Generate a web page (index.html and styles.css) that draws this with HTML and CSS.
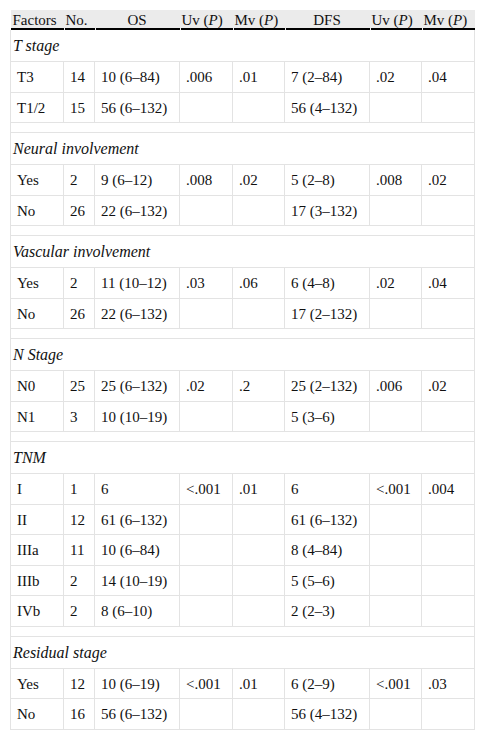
FILE: index.html
```html
<!DOCTYPE html>
<html>
<head>
<meta charset="utf-8">
<link rel="stylesheet" href="styles.css">
</head>
<body>
<table class="tbl">
  <colgroup>
    <col class="c53"><col class="c31"><col class="c85"><col class="c53"><col class="c52"><col class="c85"><col class="c52"><col class="c53">
  </colgroup>
  <thead>
    <tr>
      <th class="first">Factors</th>
      <th>No.</th>
      <th class="ctr">OS</th>
      <th>Uv (<i>P</i>)</th>
      <th>Mv (<i>P</i>)</th>
      <th class="ctr">DFS</th>
      <th>Uv (<i>P</i>)</th>
      <th>Mv (<i>P</i>)</th>
    </tr>
  </thead>
  <tbody>
    <tr class="grp top"><td colspan="8"><i>T stage</i></td></tr>
    <tr><td>T3</td><td>14</td><td>10 (6–84)</td><td>.006</td><td>.01</td><td>7 (2–84)</td><td>.02</td><td>.04</td></tr>
    <tr><td>T1/2</td><td>15</td><td>56 (6–132)</td><td></td><td></td><td>56 (4–132)</td><td></td><td></td></tr>
    <tr class="sp"><td colspan="8"></td></tr>

    <tr class="grp"><td colspan="8"><i>Neural involvement</i></td></tr>
    <tr><td>Yes</td><td>2</td><td>9 (6–12)</td><td>.008</td><td>.02</td><td>5 (2–8)</td><td>.008</td><td>.02</td></tr>
    <tr><td>No</td><td>26</td><td>22 (6–132)</td><td></td><td></td><td>17 (3–132)</td><td></td><td></td></tr>
    <tr class="sp"><td colspan="8"></td></tr>

    <tr class="grp"><td colspan="8"><i>Vascular involvement</i></td></tr>
    <tr><td>Yes</td><td>2</td><td>11 (10–12)</td><td>.03</td><td>.06</td><td>6 (4–8)</td><td>.02</td><td>.04</td></tr>
    <tr><td>No</td><td>26</td><td>22 (6–132)</td><td></td><td></td><td>17 (2–132)</td><td></td><td></td></tr>
    <tr class="sp"><td colspan="8"></td></tr>

    <tr class="grp"><td colspan="8"><i>N Stage</i></td></tr>
    <tr><td>N0</td><td>25</td><td>25 (6–132)</td><td>.02</td><td>.2</td><td>25 (2–132)</td><td>.006</td><td>.02</td></tr>
    <tr><td>N1</td><td>3</td><td>10 (10–19)</td><td></td><td></td><td>5 (3–6)</td><td></td><td></td></tr>
    <tr class="sp"><td colspan="8"></td></tr>

    <tr class="grp"><td colspan="8"><i>TNM</i></td></tr>
    <tr><td>I</td><td>1</td><td>6</td><td>&lt;.001</td><td>.01</td><td>6</td><td>&lt;.001</td><td>.004</td></tr>
    <tr><td>II</td><td>12</td><td>61 (6–132)</td><td></td><td></td><td>61 (6–132)</td><td></td><td></td></tr>
    <tr><td>IIIa</td><td>11</td><td>10 (6–84)</td><td></td><td></td><td>8 (4–84)</td><td></td><td></td></tr>
    <tr><td>IIIb</td><td>2</td><td>14 (10–19)</td><td></td><td></td><td>5 (5–6)</td><td></td><td></td></tr>
    <tr><td>IVb</td><td>2</td><td>8 (6–10)</td><td></td><td></td><td>2 (2–3)</td><td></td><td></td></tr>
    <tr class="sp"><td colspan="8"></td></tr>

    <tr class="grp"><td colspan="8"><i>Residual stage</i></td></tr>
    <tr><td>Yes</td><td>12</td><td>10 (6–19)</td><td>&lt;.001</td><td>.01</td><td>6 (2–9)</td><td>&lt;.001</td><td>.03</td></tr>
    <tr><td>No</td><td>16</td><td>56 (6–132)</td><td></td><td></td><td>56 (4–132)</td><td></td><td></td></tr>
  </tbody>
</table>
</body>
</html>
```

FILE: styles.css
```css
html, body {
  margin: 0;
  padding: 0;
  background: #fff;
}
body {
  padding: 10px 0 0 10px;
  font-family: "Liberation Serif", "Times New Roman", serif;
  font-size: 15px;
  color: #111;
}
.tbl {
  border-collapse: collapse;
  table-layout: fixed;
  width: 464px;
}
.c53 { width: 53px; }
.c52 { width: 52px; }
.c31 { width: 31px; }
.c85 { width: 85px; }

.tbl th {
  font-weight: normal;
  text-align: left;
  white-space: nowrap;
  padding: 1px 0 1px 2px;
  line-height: 18px;
  height: 18px;
  border: none;
  background:
    linear-gradient(#000, #000) no-repeat right bottom / calc(100% - 1px) 2px,
    #ebebeb;
}
.tbl th.first {
  background:
    linear-gradient(#000, #000) no-repeat left bottom / 100% 2px,
    #ebebeb;
}
.tbl th.ctr {
  text-align: center;
  padding-left: 0;
}
.tbl td {
  border: 1px solid #e3e3e3;
  padding: 6px 6px 4px 6px;
  line-height: 19.5px;
  white-space: nowrap;
  vertical-align: middle;
}
.tbl .grp td {
  padding: 6px 2px 5px 2px;
  line-height: 20px;
  font-size: 16px;
}
.tbl .top td {
  border-top: none;
}
.tbl .sp td {
  padding: 0;
  height: 9px;
  line-height: 0;
}
```
